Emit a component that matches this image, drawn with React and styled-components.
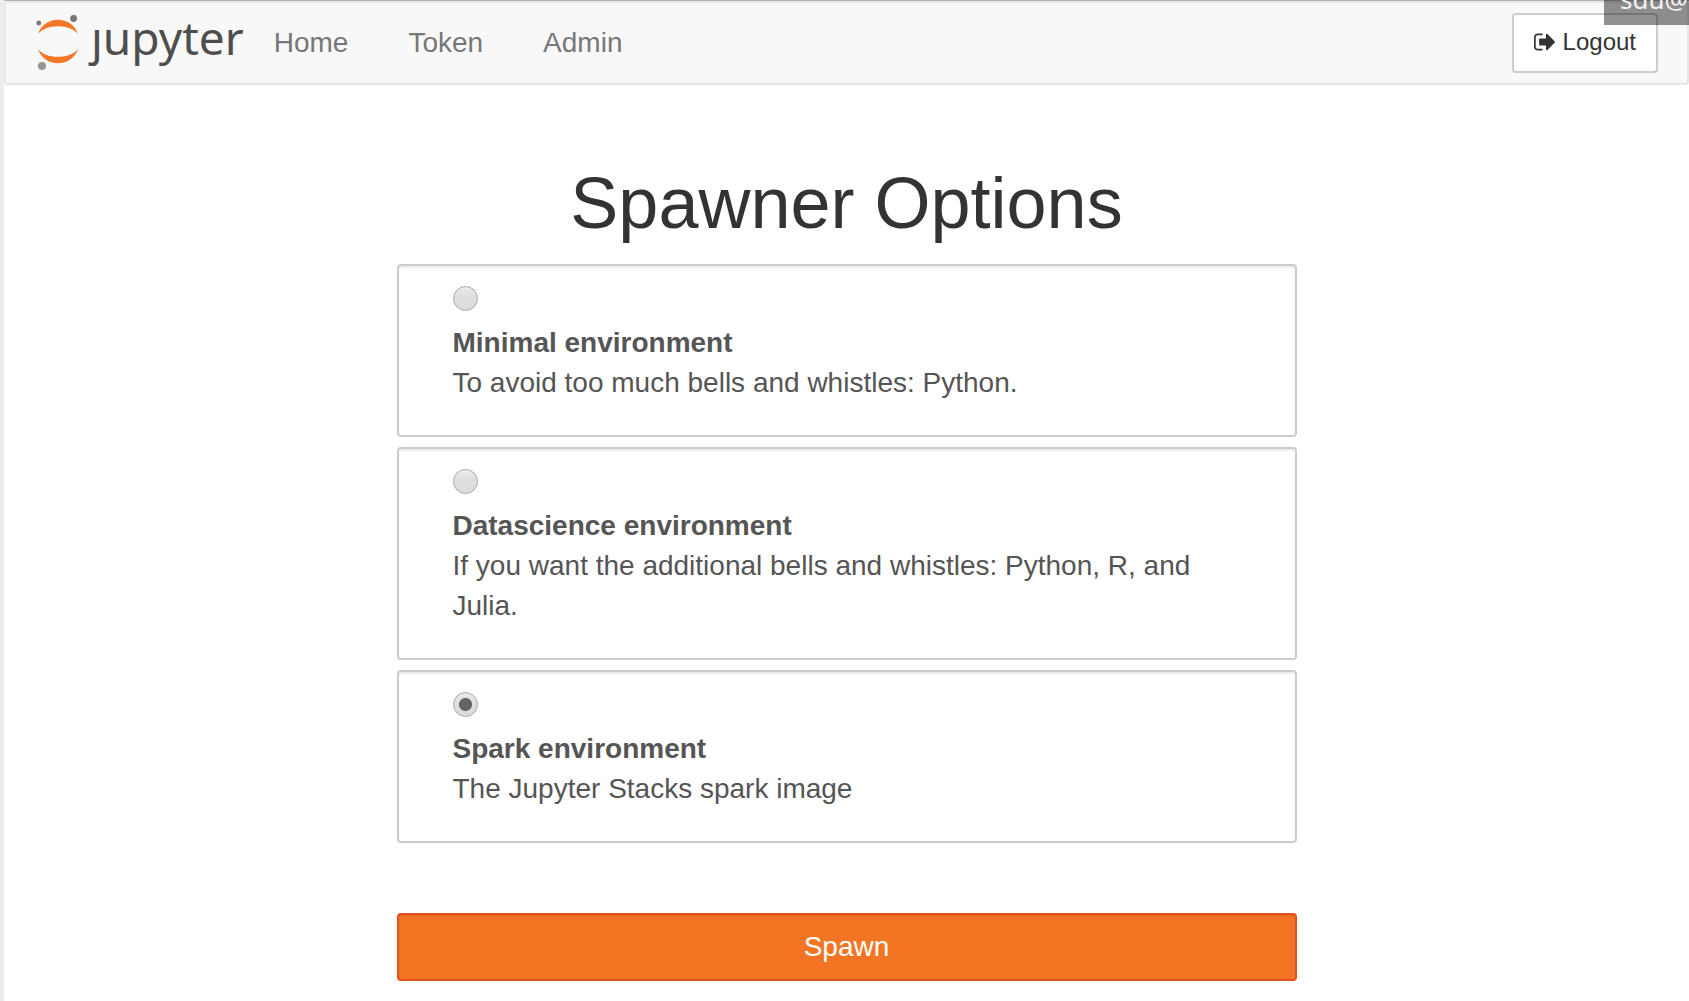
import React, { useState } from "react";
import styled, { createGlobalStyle } from "styled-components";

const GlobalStyle = createGlobalStyle`
  *, *::before, *::after { box-sizing: border-box; }
  body {
    margin: 0;
    background: #fff;
    color: #333;
    font: 28px/40px "Liberation Sans", Arial, sans-serif;
    overflow-x: hidden;
  }
`;

const Page = styled.div`
  position: relative;
  min-height: 100vh;
  border-left: 4px solid #ececec;
  overflow: hidden;
`;

const Navbar = styled.header`
  display: flex;
  align-items: center;
  justify-content: space-between;
  height: 84px;
  padding: 0 29px 0 28px;
  background: #f8f8f8;
  border: 2px solid #e7e7e7;
  border-radius: 4px;
`;

const TopEdge = styled.div`
  height: 1px;
  background: #b2b2b2;
`;

const NavGroup = styled.nav`
  display: flex;
  align-items: center;
`;

const Brand = styled.a`
  display: flex;
  align-items: center;
  gap: 9px;
  height: 60px;
  color: #4e4e4e;
  text-decoration: none;
`;

const Wordmark = styled.span`
  padding-bottom: 12px;
  font: 46px/48px "Noto Sans", sans-serif;
`;

const NavLink = styled.a`
  padding: 0 30px;
  color: #777;
  text-decoration: none;
`;

const LogoutButton = styled.button`
  display: flex;
  align-items: center;
  gap: 7px;
  height: 60px;
  padding: 0 20px 2px;
  background: #fff;
  border: 2px solid #ccc;
  border-radius: 4px;
  color: #333;
  font: 24px/36px "Liberation Sans", Arial, sans-serif;
`;

const UserBadge = styled.div`
  position: absolute;
  top: 0;
  right: 0;
  width: 85px;
  height: 25px;
  padding-left: 16px;
  overflow: hidden;
  display: flex;
  align-items: flex-end;
  background: rgba(0, 0, 0, 0.43);
  color: #f2f2f2;
  font: 26px/52px "Noto Sans", sans-serif;
`;

const Main = styled.main`
  width: 100%;
  max-width: 900px;
  margin: 0 auto;
  padding: 77px 0 20px;
`;

const Title = styled.h1`
  margin: 0 0 20px;
  font-size: 72px;
  line-height: 82px;
  font-weight: 400;
  text-align: center;
`;

const Options = styled.div`
  display: grid;
  gap: 10px;
  margin-bottom: 70px;
`;

const Option = styled.label`
  display: block;
  padding: 20px 54px 32px;
  border: 2px solid #ccc;
  border-radius: 4px;
  box-shadow: inset 0 2px 2px rgba(0, 0, 0, 0.075);
  color: #555;
`;

const Radio = styled.input`
  appearance: none;
  display: block;
  width: 25px;
  height: 25px;
  margin: 0 0 12px;
  border: 1px solid #a9a9a9;
  border-radius: 50%;
  background: ${(p) => (p.checked ? "radial-gradient(circle, #636363 6px, transparent 7px)," : "")}
    linear-gradient(#ececec, #dedede 40%, #dcdcdc);
`;

const OptionName = styled.strong`
  display: block;
`;

const SpawnButton = styled.button`
  display: block;
  width: 100%;
  height: 68px;
  border: 2px solid #e34f21;
  border-radius: 4px;
  background: #f37524;
  box-shadow: inset 0 2px 2px rgba(0, 0, 0, 0.075);
  color: #fff;
  font: inherit;
`;

const environments = [
  { id: "minimal", name: "Minimal environment", text: "To avoid too much bells and whistles: Python." },
  { id: "datascience", name: "Datascience environment", text: "If you want the additional bells and whistles: Python, R, and Julia." },
  { id: "spark", name: "Spark environment", text: "The Jupyter Stacks spark image" },
];

function PlanetLogo() {
  return (
    <svg width="48" height="60" viewBox="34 13 48 60" aria-hidden="true">
      <path fill="#f37726" d="M38 34C41 25 49 19.7 58 19.7S75 25 78 34C74 29 67 26.2 58 26.2S42 29 38 34Z" />
      <path fill="#f37726" d="M38 49C41 58 49 63.3 58 63.3S75 58 78 49C74 54 67 56.8 58 56.8S42 54 38 49Z" />
      <circle cx="38.8" cy="23" r="2.4" fill="#767677" />
      <circle cx="73.6" cy="18.5" r="3.4" fill="#767677" />
      <circle cx="42" cy="66" r="4.1" fill="#989798" />
    </svg>
  );
}

function SignOutIcon() {
  return (
    <svg width="22" height="24" viewBox="0 0 1643 1792" fill="currentColor" aria-hidden="true">
      <path d="M640 1440q0 4 1 20t.5 26.5-3 23.5-10 19.5-20.5 6.5h-320q-119 0-203.500-84.500t-84.500-203.500v-704q0-119 84.500-203.500t203.500-84.500h320q13 0 22.500 9.500t9.500 22.500q0 4 1 20t.5 26.500-3 23.500-10 19.500-20.500 6.500h-320q-66 0-113 47t-47 113v704q0 66 47 113t113 47h312l11.500 1 11.500 3 8 5.500 7 9 2 13.500zM1568 896q0 26-19 45l-544 544q-19 19-45 19t-45-19-19-45v-288h-448q-26 0-45-19t-19-45v-384q0-26 19-45t45-19h448v-288q0-26 19-45t45-19 45 19l544 544q19 19 19 45z" />
    </svg>
  );
}

export default function App() {
  const [selected, setSelected] = useState("spark");
  return (
    <Page>
      <GlobalStyle />
      <TopEdge />
      <Navbar>
        <NavGroup>
          <Brand href="#" aria-label="jupyter">
            <PlanetLogo />
            <Wordmark>ȷupyter</Wordmark>
          </Brand>
          <NavLink href="#home">Home</NavLink>
          <NavLink href="#token">Token</NavLink>
          <NavLink href="#admin">Admin</NavLink>
        </NavGroup>
        <LogoutButton type="button">
          <SignOutIcon />
          Logout
        </LogoutButton>
      </Navbar>
      <UserBadge>sdu@</UserBadge>
      <Main>
        <Title>Spawner Options</Title>
        <Options>
          {environments.map((env) => (
            <Option key={env.id}>
              <Radio
                type="radio"
                name="environment"
                value={env.id}
                checked={selected === env.id}
                onChange={() => setSelected(env.id)}
              />
              <OptionName>{env.name}</OptionName>
              {env.text}
            </Option>
          ))}
        </Options>
        <SpawnButton type="button">Spawn</SpawnButton>
      </Main>
    </Page>
  );
}
